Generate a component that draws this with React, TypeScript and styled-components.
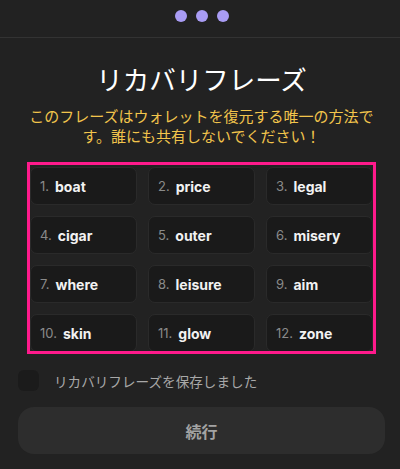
import React from "react";
import styled, { createGlobalStyle } from "styled-components";

const Global = createGlobalStyle`
  html, body { margin: 0; padding: 0; background: #222222; }
  body { font-family: Inter, "Noto Sans CJK JP", sans-serif; }
  * { box-sizing: border-box; }
`;

const Page = styled.div`
  width: 400px;
  height: 469px;
  background: #222222;
  display: flex;
  flex-direction: column;
  overflow: hidden;
`;

const Header = styled.div`
  height: 38px;
  display: flex;
  justify-content: center;
  align-items: flex-start;
  padding: 10px 0 0 3px;
  gap: 9px;
  border-bottom: 1px solid #333333;
`;

const Dot = styled.span`
  width: 12px;
  height: 12px;
  border-radius: 50%;
  background: #a99cf4;
`;

const Body = styled.div`
  display: flex;
  flex-direction: column;
  padding: 0 15px 0 18px;
`;

const Title = styled.h1`
  margin: 23px 0 0;
  font-family: "Noto Sans CJK JP", sans-serif;
  font-weight: 400;
  font-size: 26.5px;
  line-height: 35px;
  color: #ffffff;
  text-align: center;
`;

const Warning = styled.p`
  margin: 10px 0 0;
  padding: 0 6px;
  font-family: "Noto Sans CJK JP", sans-serif;
  font-size: 15px;
  line-height: 19.5px;
  color: #f2c54c;
  text-align: center;
`;

const Highlight = styled.div`
  position: relative;
  margin: 22px 12px 0;
  &::after {
    content: "";
    position: absolute;
    left: -3px;
    right: -3px;
    top: -5px;
    bottom: -2px;
    border: 3px solid #ff1a8c;
    pointer-events: none;
  }
`;

const Grid = styled.div`
  display: grid;
  grid-template-columns: repeat(3, 1fr);
  column-gap: 11px;
  row-gap: 11px;
`;

const Cell = styled.div`
  height: 38px;
  background: #1a1a1a;
  border: 1px solid #2a2a2a;
  border-radius: 7px;
  display: flex;
  align-items: center;
  padding-left: 9px;
  gap: 6px;
`;

const Num = styled.span`
  font-family: Inter, sans-serif;
  font-size: 13px;
  color: #8a8a8a;
`;

const Word = styled.span`
  font-family: Inter, sans-serif;
  font-size: 14px;
  font-weight: 700;
  color: #f2f2f2;
`;

const CheckRow = styled.label`
  margin-top: 18px;
  display: flex;
  align-items: center;
  gap: 15px;
`;

const Box = styled.span`
  width: 21px;
  height: 21px;
  border-radius: 6px;
  background: #1b1b1b;
`;

const CheckText = styled.span`
  font-family: "Noto Sans CJK JP", sans-serif;
  font-size: 13.6px;
  color: #a8a8a8;
`;

const Button = styled.button`
  margin-top: 16px;
  height: 47px;
  border: none;
  border-radius: 16px;
  background: #2d2d2d;
  color: #a3a3a3;
  font-family: "Noto Sans CJK JP", sans-serif;
  font-size: 16px;
  font-weight: 700;
  padding: 0;
`;

const words = [
  "boat", "price", "legal", "cigar", "outer", "misery",
  "where", "leisure", "aim", "skin", "glow", "zone",
];

export default function App() {
  return (
    <>
      <Global />
      <Page>
        <Header>
          <Dot />
          <Dot />
          <Dot />
        </Header>
        <Body>
          <Title>リカバリフレーズ</Title>
          <Warning>
            このフレーズはウォレットを復元する唯一の方法です。誰にも共有しないでください！
          </Warning>
          <Highlight>
            <Grid>
              {words.map((w, i) => (
                <Cell key={w}>
                  <Num>{i + 1}.</Num>
                  <Word>{w}</Word>
                </Cell>
              ))}
            </Grid>
          </Highlight>
          <CheckRow>
            <Box />
            <CheckText>リカバリフレーズを保存しました</CheckText>
          </CheckRow>
          <Button>続行</Button>
        </Body>
      </Page>
    </>
  );
}
